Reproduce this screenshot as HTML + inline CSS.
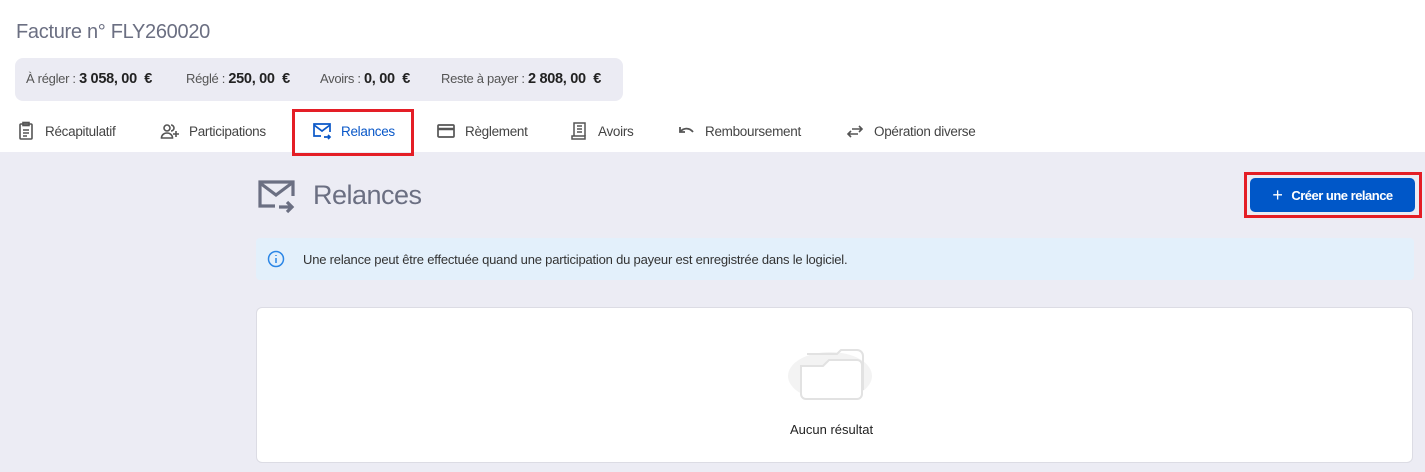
<!DOCTYPE html>
<html><head><meta charset="utf-8"><style>
*{margin:0;padding:0;box-sizing:border-box}
body{width:1425px;height:472px;overflow:hidden;background:#fff;font-family:"Liberation Sans",sans-serif;color:#333;position:relative}
.abs{position:absolute}
h1{position:absolute;left:16px;top:21px;font-size:20px;font-weight:normal;color:#6b6f82;letter-spacing:-0.3px}
.sum{left:15px;top:58px;width:608px;height:43px;background:#ebebf3;border-radius:8px;font-size:13px;color:#555;letter-spacing:-0.3px}
.sum span{position:absolute;top:13px;white-space:nowrap}
.sum b{color:#222;font-size:14.5px}
.tab{top:121px;font-size:13.5px;color:#444;display:flex;align-items:center;gap:9px;letter-spacing:-0.3px}
.tab svg{width:20px;height:20px}
.gray{left:0;top:152px;width:1425px;height:320px;background:#ececf4}
.red{border:3px solid #e41e26}
</style></head><body>
<h1>Facture n° FLY260020</h1>
<div class="abs sum"><span style="left:11px">À régler : <b>3 058, 00 &nbsp;€</b></span><span style="left:171px">Réglé : <b>250, 00 &nbsp;€</b></span><span style="left:305px">Avoirs : <b>0, 00 &nbsp;€</b></span><span style="left:426px">Reste à payer : <b>2 808, 00 &nbsp;€</b></span></div>

<div class="abs tab" style="left:16px"><svg viewBox="0 0 20 20" fill="none" stroke="#555" stroke-width="1.6"><rect x="4" y="3" width="12" height="15" rx="1"/><rect x="7" y="1.5" width="6" height="3"/><path d="M7 9h6M7 12h6M7 15h4"/></svg>Récapitulatif</div>
<div class="abs tab" style="left:160px"><svg viewBox="0 0 20 20" fill="none" stroke="#555" stroke-width="1.6"><circle cx="7" cy="7" r="3"/><path d="M1.5 17c0-3 2.5-5 5.5-5s5.5 2 5.5 5z"/><path d="M11 4a3 3 0 0 1 0 6M16 10v6M13 13h6"/></svg>Participations</div>
<div class="abs tab" style="left:312px;color:#0a58c8"><svg viewBox="0 0 20 20" fill="none" stroke="#0a58c8" stroke-width="1.7"><path d="M9 15H2V3h16v8"/><path d="M2 4l8 6 8-6"/><path d="M12 16h6M16 14l2 2-2 2"/></svg>Relances</div>
<div class="abs tab" style="left:436px"><svg viewBox="0 0 20 20" fill="none" stroke="#555" stroke-width="1.7"><rect x="2" y="4" width="16" height="12" rx="1"/><path d="M2 8h16" stroke-width="2.5"/></svg>Règlement</div>
<div class="abs tab" style="left:569px"><svg viewBox="0 0 20 20" fill="none" stroke="#555" stroke-width="1.5"><path d="M5 15V2h11v13"/><path d="M3 15h13v3H3z"/><path d="M8 5h5M8 8h5M8 11h5"/></svg>Avoirs</div>
<div class="abs tab" style="left:676px"><svg viewBox="0 0 20 20" fill="none" stroke="#555" stroke-width="1.8"><path d="M4 6v5h5"/><path d="M4 11c3-4 9-5 13 0"/></svg>Remboursement</div>
<div class="abs tab" style="left:845px"><svg viewBox="0 0 20 20" fill="none" stroke="#555" stroke-width="1.6"><path d="M7 8h10M14 5l3 3-3 3M3 13h10M6 10l-3 3 3 3"/></svg>Opération diverse</div>

<div class="abs gray"></div>
<div class="abs red" style="left:292px;top:109px;width:122px;height:47px"></div>
<svg class="abs" style="left:257px;top:179px" width="40" height="36" viewBox="0 0 40 36" fill="none" stroke="#6b6f82" stroke-width="3.2"><path d="M18 27H3V3h33v14"/><path d="M3 4l16 12 16-12"/><path d="M22 28h12M30 23l5 5-5 5"/></svg>
<div class="abs" style="left:313px;top:180px;font-size:27px;color:#6b6f82;letter-spacing:-0.5px">Relances</div>

<div class="abs" style="left:1250px;top:178px;width:165px;height:34px;background:#0057c8;border-radius:5px;color:#fff;font-size:13px;font-weight:bold;display:flex;align-items:center;justify-content:center;letter-spacing:-0.5px"><span style="font-size:18px;font-weight:normal;margin-right:9px">+</span>Créer une relance</div>
<div class="abs red" style="left:1244px;top:172px;width:178px;height:46px"></div>

<div class="abs" style="left:256px;top:238px;width:1158px;height:42px;background:#e3f0fb;border-radius:4px;font-size:13px;color:#333;display:flex;align-items:center;letter-spacing:-0.2px">
<svg style="margin:0 18px 0 11px" width="18" height="18" viewBox="0 0 18 18" fill="none" stroke="#2b86e6" stroke-width="1.5"><circle cx="9" cy="9" r="7.5"/><path d="M9 8v5M9 5v1"/></svg>Une relance peut être effectuée quand une participation du payeur est enregistrée dans le logiciel.</div>

<div class="abs" style="left:256px;top:307px;width:1157px;height:156px;background:#fff;border:1px solid #dcdce4;border-radius:6px"></div>
<svg class="abs" style="left:785px;top:342px" width="100" height="68" viewBox="0 0 100 68" fill="none"><ellipse cx="45" cy="34" rx="42" ry="24" fill="#f3f3f3"/><path d="M22 12h30l4-4h16a6 6 0 0 1 6 6v34" stroke="#e2e2e2" stroke-width="2"/><path d="M16 24h22l6-6h28a5 5 0 0 1 5 5v29a5 5 0 0 1-5 5H21a5 5 0 0 1-5-5z" fill="#fff" stroke="#e2e2e2" stroke-width="2"/></svg>
<div class="abs" style="left:790px;top:422px;font-size:13px;color:#222">Aucun résultat</div>
</body></html>
